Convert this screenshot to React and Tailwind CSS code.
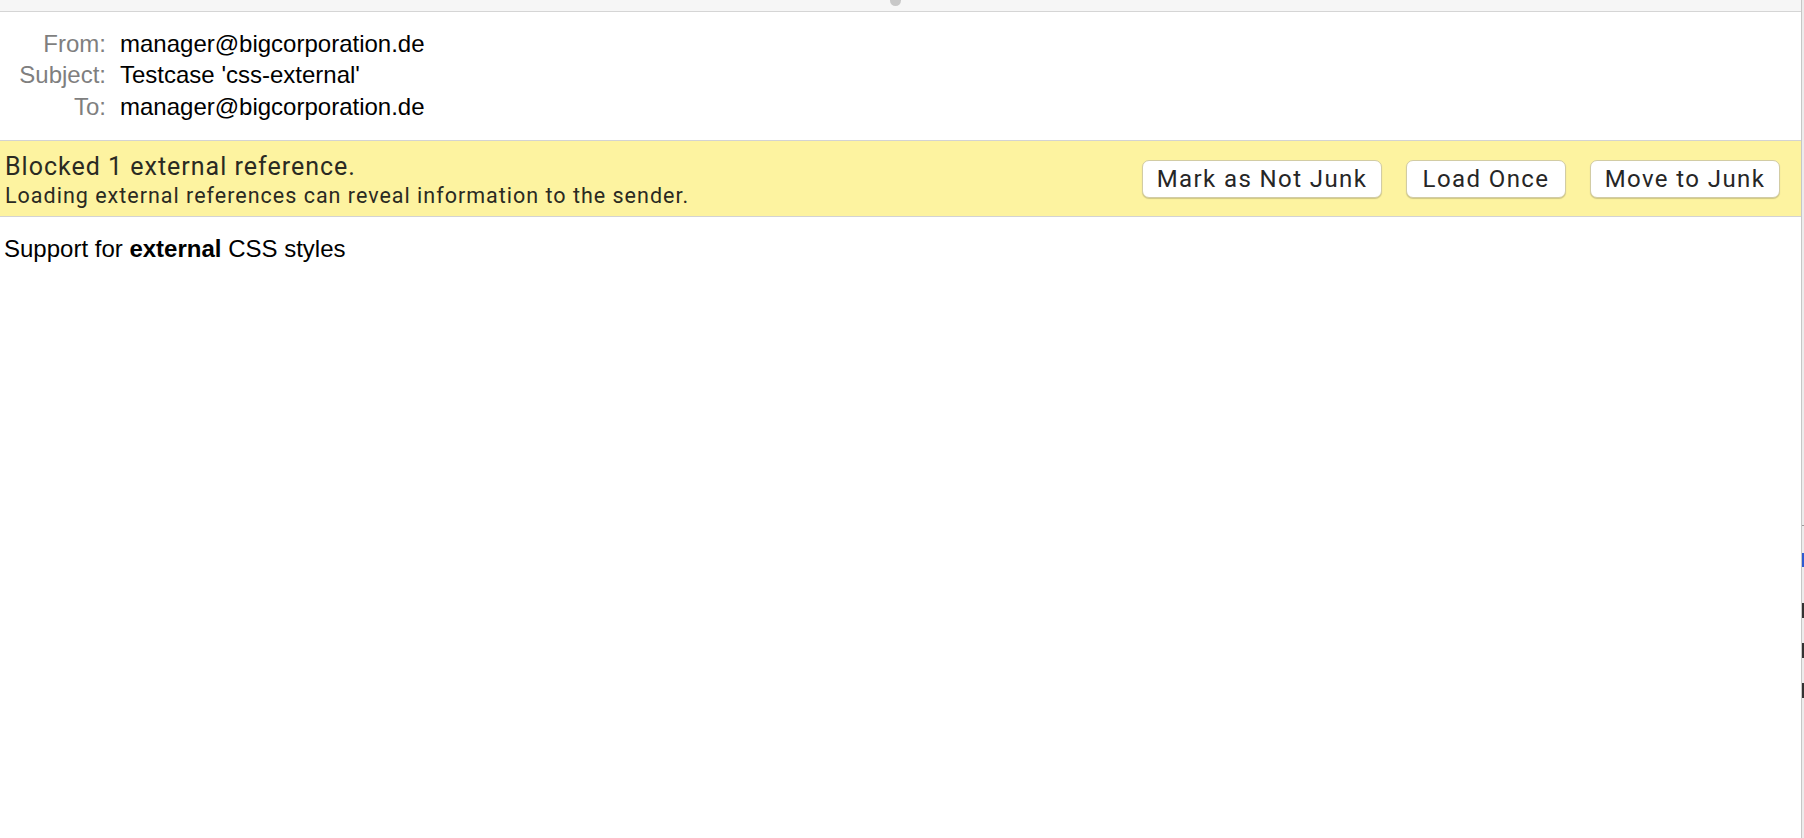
import React from 'react';

const HEADERS = [
  { label: 'From:', value: 'manager@bigcorporation.de' },
  { label: 'Subject:', value: "Testcase 'css-external'" },
  { label: 'To:', value: 'manager@bigcorporation.de' },
];

const ACTIONS = [
  { label: 'Mark as Not Junk', w: 'w-[240px]' },
  { label: 'Load Once', w: 'w-[160px]' },
  { label: 'Move to Junk', w: 'w-[190px]' },
];

const helv = { fontFamily: '"Liberation Sans", Arial, Helvetica, sans-serif' };

export default function App() {
  return (
    <div className="h-[838px] w-full overflow-hidden bg-white flex" style={helv}>
      <div className="flex-1 flex flex-col min-w-0">
        {/* top split handle */}
        <div className="relative h-[12px] bg-[#f6f6f6] border-b border-[#d5d5d5]">
          <div className="absolute left-[890px] -top-[5px] w-[11px] h-[11px] rounded-full bg-[#c8c8c8]" />
        </div>

        {/* message headers */}
        <div className="pt-[15.5px] pb-[18px] grid grid-cols-[106px_1fr] gap-x-[14px] text-[24px] leading-[31.5px]">
          {HEADERS.map((h) => (
            <React.Fragment key={h.label}>
              <span className="text-right text-[#7f7f7f]">{h.label}</span>
              <span className="text-black">{h.value}</span>
            </React.Fragment>
          ))}
        </div>

        {/* blocked content banner */}
        <div
          className="h-[77px] bg-[#fdf3a0] border-y border-[#d3d3d3] flex items-center justify-between pl-[5px] pr-[21px]"
          style={{ fontFamily: 'Roboto, Inter, sans-serif' }}
        >
          <div className="self-start pt-[11px] flex flex-col text-[#2a2a22]">
            <span className="text-[25px] leading-[29px] tracking-[1px]">Blocked 1 external reference.</span>
            <span className="text-[21.5px] leading-[29px] tracking-[1px]">Loading external references can reveal information to the sender.</span>
          </div>
          <div className="flex items-center gap-6">
            {ACTIONS.map((a) => (
              <button
                key={a.label}
                className={`${a.w} h-[38px] flex items-center justify-center bg-white rounded-[7px] border border-[#d2cca4] shadow-[0_1px_1px_rgba(0,0,0,0.18)] text-[24px] tracking-[1.4px] text-[#262626] leading-none`}
              >
                {a.label}
              </button>
            ))}
          </div>
        </div>

        {/* body */}
        <div className="pt-[14px] pl-[4px] text-[24px] text-black">
          Support for <b>external</b> CSS styles
        </div>
      </div>

      {/* right window edge */}
      <div className="w-px bg-[#c6c6c6]" />
      <div className="w-[2px] bg-[#ececec] flex flex-col">
        <div className="mt-[525px] h-px bg-[#9a9a9a]" />
        <div className="mt-[27px] h-[14px] bg-[#2d5bd1]" />
        <div className="mt-[36px] h-[15px] bg-[#333]" />
        <div className="mt-[25px] h-[15px] bg-[#333]" />
        <div className="mt-[25px] h-[15px] bg-[#333]" />
      </div>
    </div>
  );
}
